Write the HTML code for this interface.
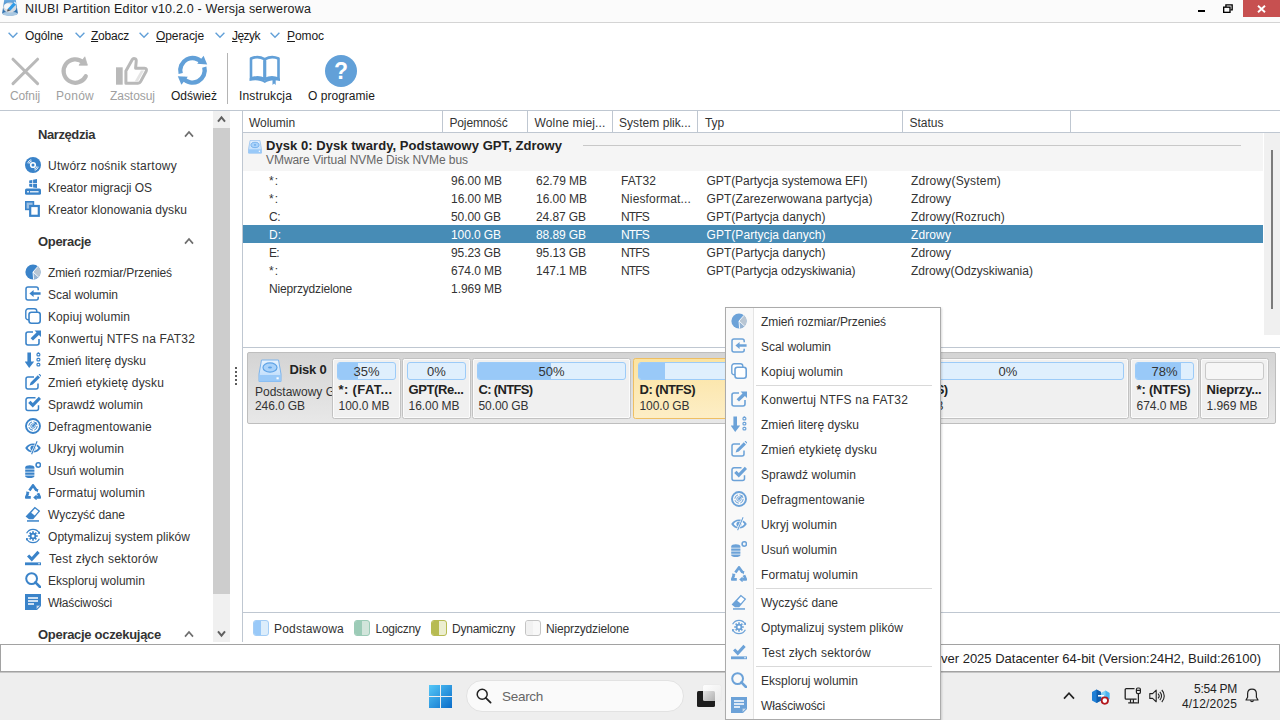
<!DOCTYPE html>
<html lang="pl"><head><meta charset="utf-8"><title>NIUBI Partition Editor</title>
<style>
html,body{margin:0;padding:0;}
body{width:1280px;height:720px;position:relative;overflow:hidden;background:#fff;font-family:"Liberation Sans",sans-serif;font-size:12px;color:#333;}
.r{position:absolute;box-sizing:border-box;display:block;}
.t{position:absolute;white-space:nowrap;display:block;}
.b{font-weight:bold;}
.g{color:#a0a0a0;}
.w{color:#fff;}
u{text-decoration:underline;text-underline-offset:1px;}
.b{font-size:13px;}

</style></head>
<body>
<div class="r" style="left:0px;top:0px;width:1280px;height:22px;background:#fbfbfb;"></div>
<div class="r" style="left:0px;top:22px;width:1280px;height:1px;background:#d4d4d4;"></div>
<svg class="r" style="left:2px;top:0px" width="16" height="17" viewBox="0 0 16 17"><defs><linearGradient id="ig" x1="0" y1="0" x2="0" y2="1"><stop offset="0" stop-color="#6aaae0"/><stop offset="1" stop-color="#1f5f9e"/></linearGradient></defs>
<path d="M2.2 0h11.6l2 12.8c0 1.7-3.300000000000001 2.8-7.8 2.8S0.2 14.5 0.2 12.8z" fill="url(#ig)"/>
<ellipse cx="8" cy="13.8" rx="7.6" ry="2.1" fill="#a9c8e2"/>
<ellipse cx="7.8" cy="7.6" rx="6.6" ry="5" fill="#d5dbe2"/><ellipse cx="5.6" cy="6.4" rx="3.4" ry="2.8" fill="#f6f8fa"/>
<path d="M5.8 8.8l5.800000000000001-6.2 2.4 2-5.800000000000001 6.2z" fill="#2f9be8"/><path d="M5.8 8.8l-0.8 2.600000000000001 3.2-0.6z" fill="#555"/><path d="M11.6 2.6l1-1 2.4 2-1 1z" fill="#d6eafb"/></svg>
<span class="t" style="left:25px;top:1px;height:16px;line-height:16px;letter-spacing:0.185px;color:#1a1a1a;font-size:12.5px;">NIUBI Partition Editor v10.2.0 - Wersja serwerowa</span>
<div class="r" style="left:1198px;top:10px;width:7px;height:2px;background:#000;"></div>
<svg class="r" style="left:1223px;top:4px" width="10" height="9.2" viewBox="0 0 12 11"><path d="M3.5 3.5V1h7.5v6H9" fill="none" stroke="#000" stroke-width="1.6"/><rect x="0.8" y="3.8" width="7.6" height="6.2" fill="#fbfbfb" stroke="#000" stroke-width="1.6"/></svg>
<div class="r" style="left:1243px;top:0px;width:37px;height:17px;background:#c75050;"></div>
<svg class="r" style="left:1257px;top:4.5px" width="9" height="8" viewBox="0 0 9 8"><path d="M1 0.8L8 7.2M8 0.8L1 7.2" stroke="#fff" stroke-width="1.9" fill="none"/></svg>
<svg class="r" style="left:7px;top:32px" width="12" height="7" viewBox="0 0 12 7"><path d="M1.6 0.8L6 5.2L10.4 0.8" fill="none" stroke="#62a0d8" stroke-width="1.4"/></svg>
<span class="t" style="left:25px;top:28px;height:16px;line-height:16px;letter-spacing:-0.117px;color:#1a1a1a;">Ogólne</span>
<svg class="r" style="left:73.5px;top:32px" width="12" height="7" viewBox="0 0 12 7"><path d="M1.6 0.8L6 5.2L10.4 0.8" fill="none" stroke="#62a0d8" stroke-width="1.4"/></svg>
<span class="t" style="left:91px;top:28px;height:16px;line-height:16px;letter-spacing:-0.229px;color:#1a1a1a;"><u>Z</u>obacz</span>
<svg class="r" style="left:137.5px;top:32px" width="12" height="7" viewBox="0 0 12 7"><path d="M1.6 0.8L6 5.2L10.4 0.8" fill="none" stroke="#62a0d8" stroke-width="1.4"/></svg>
<span class="t" style="left:156px;top:28px;height:16px;line-height:16px;letter-spacing:-0.088px;color:#1a1a1a;"><u>O</u>peracje</span>
<svg class="r" style="left:213.5px;top:32px" width="12" height="7" viewBox="0 0 12 7"><path d="M1.6 0.8L6 5.2L10.4 0.8" fill="none" stroke="#62a0d8" stroke-width="1.4"/></svg>
<span class="t" style="left:232px;top:28px;height:16px;line-height:16px;letter-spacing:-0.537px;color:#1a1a1a;"><u>J</u>ęzyk</span>
<svg class="r" style="left:268.5px;top:32px" width="12" height="7" viewBox="0 0 12 7"><path d="M1.6 0.8L6 5.2L10.4 0.8" fill="none" stroke="#62a0d8" stroke-width="1.4"/></svg>
<span class="t" style="left:287px;top:28px;height:16px;line-height:16px;letter-spacing:-0.072px;color:#1a1a1a;"><u>P</u>omoc</span>
<svg class="r" style="left:10px;top:56px" width="30" height="30" viewBox="0 0 30 30"><path d="M3 3.2L27.6 27.6M27.6 3.2L3 27.6" stroke="#b9b9b9" stroke-width="3" stroke-linecap="round" fill="none"/></svg>
<span class="t g" style="left:10px;top:88px;height:16px;line-height:16px;letter-spacing:-0.115px;">Cofnij</span>
<svg class="r" style="left:60px;top:55px" width="30" height="32" viewBox="0 0 30 32"><path d="M25.8 21.2A11.7 11.7 0 1 1 23.2 7.4" fill="none" stroke="#b9b9b9" stroke-width="4.2" stroke-linecap="round"/><path d="M19 10.2L27.4 10.2L24.8 1.8z" fill="#b9b9b9" stroke="#b9b9b9" stroke-width="0.8" stroke-linejoin="round"/></svg>
<span class="t g" style="left:56px;top:88px;height:16px;line-height:16px;letter-spacing:0.259px;">Ponów</span>
<svg class="r" style="left:114px;top:55px" width="36" height="32" viewBox="0 0 36 32"><rect x="2" y="12.3" width="6.7" height="17.4" fill="#b9b9b9"/>
<path d="M11.9 28.2V16L18.3 4.6C19.3 2.8 22.6 3.2 22.2 6.4L21.6 13.2H30.6C32.4 13.2 32.8 14.8 32.2 16.2L26.6 26.6C26 27.8 25.2 28.2 24 28.2z" fill="none" stroke="#b9b9b9" stroke-width="3" stroke-linejoin="round"/>
<path d="M20.5 26.7L27 15.6h3L23.800000000000001 26.7z" fill="#e4e4e4"/></svg>
<span class="t g" style="left:110px;top:88px;height:16px;line-height:16px;letter-spacing:-0.045px;">Zastosuj</span>
<svg class="r" style="left:176px;top:54px" width="34" height="34" viewBox="0 0 34 34"><path d="M4.7 19.5A12.2 12.2 0 0 1 25.9 8.5" fill="none" stroke="#62a0d8" stroke-width="4.4"/>
<path d="M28.3 13.1A12.2 12.2 0 0 1 7.1 24.1" fill="none" stroke="#62a0d8" stroke-width="4.4"/>
<path d="M27.6 1.8L31.2 10.4L21.2 9.8z" fill="#62a0d8"/><path d="M5.4 30.8L1.8 22.2L11.8 22.8z" fill="#62a0d8"/></svg>
<span class="t" style="left:171px;top:88px;height:16px;line-height:16px;letter-spacing:-0.002px;color:#1a1a1a;">Odśwież</span>
<div class="r" style="left:227px;top:53px;width:1px;height:51px;background:#b4b4b4;"></div>
<svg class="r" style="left:248px;top:55px" width="34" height="32" viewBox="0 0 34 32"><path d="M3 3.5C7.5 1.5 12.5 1.8 16.5 4.2V24.2C12.5 22 7.5 21.8 3 23.8z" fill="none" stroke="#62a0d8" stroke-width="2.6" stroke-linejoin="round"/>
<path d="M30.5 3.5C26 1.5 21 1.8 17 4.2V24.2C21 22 26 21.8 30.5 23.8z" fill="none" stroke="#62a0d8" stroke-width="2.6" stroke-linejoin="round"/>
<path d="M1.5 23.5C7 21.8 12.5 22.2 16.8 25.5C21 22.2 26.5 21.8 32 23.5V26C26.5 24.5 21 25 16.8 28C12.5 25 7 24.5 1.5 26z" fill="#62a0d8"/>
<path d="M24.5 24.5h3.2v5.6l-1.6-1.5l-1.6 1.5z" fill="#62a0d8"/></svg>
<span class="t" style="left:239px;top:88px;height:16px;line-height:16px;letter-spacing:0.164px;color:#1a1a1a;">Instrukcja</span>
<div class="r" style="left:325px;top:55px;width:32px;height:32px;background:#62a0d8;border-radius:50%;"></div>
<span class="t b w" style="left:333px;top:56.5px;height:28px;line-height:28px;font-size:23px;width:16px;text-align:center;">?</span>
<span class="t" style="left:308px;top:88px;height:16px;line-height:16px;letter-spacing:0.027px;color:#1a1a1a;">O programie</span>
<div class="r" style="left:0px;top:110px;width:1280px;height:1px;background:#bfc7d1;"></div>
<span class="t b" style="left:38px;top:127px;height:16px;line-height:16px;letter-spacing:-0.411px;">Narzędzia</span>
<svg class="r" style="left:184px;top:130px" width="10" height="8" viewBox="0 0 10 8"><path d="M1 6.6L5 2L9 6.6" fill="none" stroke="#6e6e6e" stroke-width="1.7"/></svg>
<span class="t b" style="left:38px;top:234px;height:16px;line-height:16px;letter-spacing:-0.332px;">Operacje</span>
<svg class="r" style="left:184px;top:237px" width="10" height="8" viewBox="0 0 10 8"><path d="M1 6.6L5 2L9 6.6" fill="none" stroke="#6e6e6e" stroke-width="1.7"/></svg>
<span class="t b" style="left:38px;top:627px;height:16px;line-height:16px;letter-spacing:-0.297px;">Operacje oczekujące</span>
<svg class="r" style="left:184px;top:630px" width="10" height="8" viewBox="0 0 10 8"><path d="M1 6.6L5 2L9 6.6" fill="none" stroke="#6e6e6e" stroke-width="1.7"/></svg>
<svg class="r" style="left:25px;top:157px" width="16" height="16" viewBox="0 0 16 16"><circle cx="8" cy="8" r="8" fill="#3a83c9"/><circle cx="8" cy="8" r="3.1" fill="#fff"/><circle cx="8" cy="8" r="1.5" fill="#3a83c9"/><path d="M2.6 6.2A5.8 5.8 0 0 1 6.2 2.6M3.9 6.8A4.4 4.4 0 0 1 6.8 3.9M13.4 9.8A5.8 5.8 0 0 1 9.8 13.4M12.1 9.2A4.4 4.4 0 0 1 9.2 12.1" stroke="#fff" stroke-width="0.9" fill="none"/></svg>
<span class="t" style="left:48px;top:158px;height:16px;line-height:16px;letter-spacing:0.256px;">Utwórz nośnik startowy</span>
<svg class="r" style="left:25px;top:179px" width="16" height="16" viewBox="0 0 16 16"><path d="M4.2 1.6L7.3 1v3.2H4.2zM8.1 0.8L12 0v4.2H8.1zM4.2 5h3.1v3.2L4.2 7.6zM8.1 5H12v4.1L8.1 8.4z" fill="#3a83c9"/><rect x="0" y="9.6" width="16" height="6.2" rx="1.6" fill="#3a83c9"/><rect x="2.2" y="12" width="1.6" height="1.5" fill="#fff"/><rect x="5" y="12.2" width="8.6" height="1.2" fill="#fff"/></svg>
<span class="t" style="left:48px;top:180px;height:16px;line-height:16px;letter-spacing:-0.037px;">Kreator migracji OS</span>
<svg class="r" style="left:25px;top:201px" width="16" height="16" viewBox="0 0 16 16"><rect x="0.8" y="0.8" width="7.6" height="7.6" fill="#9cc0e4" stroke="#3a83c9" stroke-width="1.6"/><rect x="5.2" y="5" width="8.6" height="9.8" fill="#fff" stroke="#3a83c9" stroke-width="2.2"/></svg>
<span class="t" style="left:48px;top:202px;height:16px;line-height:16px;letter-spacing:0.066px;">Kreator klonowania dysku</span>
<svg class="r" style="left:25px;top:264px" width="16" height="16" viewBox="0 0 16 16"><circle cx="8" cy="8" r="7.6" fill="#3a83c9"/><path d="M8 8L13 2.3A7.6 7.6 0 0 1 13.6 13.2z" fill="#b9c6d3"/><path d="M8 8L13.6 13.2A7.6 7.6 0 0 1 8.6 15.6z" fill="#97b4d2"/><path d="M13 2.3L8 8L13.6 13.2M8 8L8.6 15.6" stroke="#fff" stroke-width="0.9" fill="none"/></svg>
<span class="t" style="left:48px;top:265px;height:16px;line-height:16px;letter-spacing:-0.123px;">Zmień rozmiar/Przenieś</span>
<svg class="r" style="left:25px;top:286px" width="16" height="16" viewBox="0 0 16 16"><path d="M13.2 4.2V3a2 2 0 0 0-2-2H3a2 2 0 0 0-2 2v9a2 2 0 0 0 2 2h8.200000000000001a2 2 0 0 0 2-2v-1.2" fill="none" stroke="#3a83c9" stroke-width="1.5"/><path d="M4.4 7.5L8.6 4v2.3H15.6v2.4H8.6V11z" fill="#3a83c9"/></svg>
<span class="t" style="left:48px;top:287px;height:16px;line-height:16px;letter-spacing:-0.059px;">Scal wolumin</span>
<svg class="r" style="left:25px;top:308px" width="16" height="16" viewBox="0 0 16 16"><rect x="0.8" y="0.8" width="11" height="11" rx="2.4" fill="#fff" stroke="#3a83c9" stroke-width="1.4"/><rect x="4" y="4.2" width="11.2" height="11" rx="2.4" fill="#fff" stroke="#3a83c9" stroke-width="1.6"/></svg>
<span class="t" style="left:48px;top:309px;height:16px;line-height:16px;letter-spacing:0.092px;">Kopiuj wolumin</span>
<svg class="r" style="left:25px;top:330px" width="16" height="16" viewBox="0 0 16 16"><path d="M8 2H3a2 2 0 0 0-2 2v9a2 2 0 0 0 2 2h9a2 2 0 0 0 2-2V9" fill="none" stroke="#3a83c9" stroke-width="1.6"/><path d="M9.6 0.6H16V7l-2.1-2.1L8 10.6 5.6 8.2l5.900000000000001-5.7z" fill="#3a83c9"/></svg>
<span class="t" style="left:48px;top:331px;height:16px;line-height:16px;letter-spacing:0.196px;">Konwertuj NTFS na FAT32</span>
<svg class="r" style="left:25px;top:352px" width="16" height="16" viewBox="0 0 16 16"><path d="M2.4 0.4h3.6v9.2h3.2L4.2 16 -0.2 9.6h2.6z" fill="#3a83c9"/><g fill="none" stroke="#3a83c9" stroke-width="1.2"><rect x="12" y="1.4" width="2.8" height="2.4" rx="0.9"/><rect x="12" y="6.4" width="2.8" height="2.4" rx="0.9"/><rect x="12" y="11.4" width="2.8" height="2.4" rx="0.9"/></g><path d="M12.6 0.9h1.6" stroke="#3a83c9" stroke-width="1"/></svg>
<span class="t" style="left:48px;top:353px;height:16px;line-height:16px;letter-spacing:0.035px;">Zmień literę dysku</span>
<svg class="r" style="left:25px;top:374px" width="16" height="16" viewBox="0 0 16 16"><path d="M9 3H3a2 2 0 0 0-2 2v8a2 2 0 0 0 2 2h8a2 2 0 0 0 2-2V9.5" fill="none" stroke="#3a83c9" stroke-width="1.5"/><path d="M4.6 11.6l1-3.2L12.800000000000001 1.2l2.2 2.2L7.8 10.6zM13.6 0.4l0.9-0.6 2 2-0.6 0.9z" fill="#3a83c9"/></svg>
<span class="t" style="left:48px;top:375px;height:16px;line-height:16px;letter-spacing:0.164px;">Zmień etykietę dysku</span>
<svg class="r" style="left:25px;top:396px" width="16" height="16" viewBox="0 0 16 16"><path d="M10.5 1.8H3a2 2 0 0 0-2 2v8.7a2 2 0 0 0 2 2h8.5a2 2 0 0 0 2-2V9.2" fill="none" stroke="#3a83c9" stroke-width="1.5"/><path d="M3.2 7l2.3-2.3L7.8 7 13.8 0.8l2.3 2.2L7.8 11.6z" fill="#3a83c9"/></svg>
<span class="t" style="left:48px;top:397px;height:16px;line-height:16px;letter-spacing:0.064px;">Sprawdź wolumin</span>
<svg class="r" style="left:25px;top:418px" width="16" height="16" viewBox="0 0 16 16"><circle cx="8" cy="8" r="7" fill="none" stroke="#3a83c9" stroke-width="1.9"/><circle cx="8" cy="8" r="4.2" fill="none" stroke="#3a83c9" stroke-width="1" stroke-dasharray="5 1.6"/><circle cx="8" cy="8" r="2.2" fill="none" stroke="#3a83c9" stroke-width="0.9"/><path d="M8 8l3.4-3.4" stroke="#3a83c9" stroke-width="1.4"/><circle cx="8" cy="8" r="1" fill="#3a83c9"/></svg>
<span class="t" style="left:48px;top:419px;height:16px;line-height:16px;letter-spacing:0.204px;">Defragmentowanie</span>
<svg class="r" style="left:25px;top:440px" width="16" height="16" viewBox="0 0 16 16"><path d="M0.2 8C2 5 4.800000000000001 3.4 8 3.4S14 5 15.8 8C14 11 11.2 12.6 8 12.6S2 11 0.2 8z" fill="#3a83c9"/><path d="M2.6 8C4 6.2 5.9 5 8 5s4 1.2 5.4 3C12 9.8 10.1 11 8 11S4 9.8 2.6 8z" fill="#fff"/><circle cx="8" cy="8" r="2.6" fill="#3a83c9"/><path d="M12.4 1L6.4 14.6" stroke="#fff" stroke-width="2.4"/><path d="M12.1 1.2L6.6 14.2" stroke="#3a83c9" stroke-width="1.1"/></svg>
<span class="t" style="left:48px;top:441px;height:16px;line-height:16px;letter-spacing:0.101px;">Ukryj wolumin</span>
<svg class="r" style="left:25px;top:462px" width="16" height="16" viewBox="0 0 16 16"><path d="M0.2 5.2c0-1.2 2.1-2 4.6-2s4.6 0.8 4.6 2v1.6H0.2zM0.2 7.6h9.2v2.2H0.2zM0.2 10.600000000000001h9.2v2.2H0.2zM0.2 13.6h9.2v0.6c0 1.1-2.1 1.8-4.6 1.8s-4.6-0.7-4.6-1.8z" fill="#3a83c9"/><circle cx="13.3" cy="3" r="2.2" fill="none" stroke="#3a83c9" stroke-width="1.6"/></svg>
<span class="t" style="left:48px;top:463px;height:16px;line-height:16px;letter-spacing:0.052px;">Usuń wolumin</span>
<svg class="r" style="left:25px;top:484px" width="16" height="16" viewBox="0 0 16 16"><path d="M4.4 6.6L8 1.4l3.6 5.2" fill="none" stroke="#3a83c9" stroke-width="2.7" stroke-linejoin="round"/><path d="M9.6 5.4l3.8-0.4-0.8 3.4z" fill="#3a83c9"/><path d="M3 9L1.2 13.4h4.6" fill="none" stroke="#3a83c9" stroke-width="2.7" stroke-linejoin="round"/><path d="M1 7.4l3.6 0.6-2.4 2.8z" fill="#3a83c9"/><path d="M13 9.2l1.8 4.2h-3.6" fill="none" stroke="#3a83c9" stroke-width="2.7" stroke-linejoin="round"/><path d="M8.2 13.4L11.6 10.4v6z" fill="#3a83c9"/></svg>
<span class="t" style="left:48px;top:485px;height:16px;line-height:16px;letter-spacing:0.144px;">Formatuj wolumin</span>
<svg class="r" style="left:25px;top:506px" width="16" height="16" viewBox="0 0 16 16"><path d="M9.8 0.8l5.4 4.2-7 8.2H4L0.6 10.4z" fill="#3a83c9"/><path d="M10 2.6l3.4 2.6-3.7 4.3L6.2 6.800000000000001z" fill="#fff"/><rect x="2" y="14.2" width="12" height="1.5" fill="#3a83c9"/></svg>
<span class="t" style="left:48px;top:507px;height:16px;line-height:16px;letter-spacing:-0.021px;">Wyczyść dane</span>
<svg class="r" style="left:25px;top:528px" width="16" height="16" viewBox="0 0 16 16"><path d="M1.6 5.2A7.2 7.2 0 0 1 14.4 5.2M14.4 10.8A7.2 7.2 0 0 1 1.6 10.8" fill="none" stroke="#3a83c9" stroke-width="1.2"/><path d="M14.9 3.2l0.1 2.8-2.7-0.6zM1.1 12.8l-0.1-2.8 2.7 0.6z" fill="#3a83c9"/><g stroke="#3a83c9" stroke-width="1.6"><path d="M8 3.2v9.6M3.2 8h9.6M4.6 4.6l6.8 6.8M4.6 11.4l6.8-6.8"/></g><circle cx="8" cy="8" r="3.3" fill="#3a83c9"/><circle cx="8" cy="8" r="1.5" fill="#fff"/></svg>
<span class="t" style="left:48px;top:529px;height:16px;line-height:16px;letter-spacing:0.052px;">Optymalizuj system plików</span>
<svg class="r" style="left:25px;top:550px" width="16" height="16" viewBox="0 0 16 16"><path d="M2 6.6l2.2-2.2L6.8 7 12.4 0.8l2.3 2.1L6.8 11.4z" fill="#3a83c9"/><rect x="0" y="12.4" width="16" height="2.8" fill="#3a83c9"/><rect x="13" y="13.4" width="2" height="0.8" fill="#fff"/></svg>
<span class="t" style="left:49px;top:551px;height:16px;line-height:16px;letter-spacing:0.261px;">Test złych sektorów</span>
<svg class="r" style="left:25px;top:572px" width="16" height="16" viewBox="0 0 16 16"><circle cx="6.6" cy="6.6" r="5.4" fill="none" stroke="#3a83c9" stroke-width="2"/><path d="M10.4 10.4L15 15" stroke="#3a83c9" stroke-width="2.6" stroke-linecap="round"/></svg>
<span class="t" style="left:48px;top:573px;height:16px;line-height:16px;letter-spacing:0.017px;">Eksploruj wolumin</span>
<svg class="r" style="left:25px;top:594px" width="16" height="16" viewBox="0 0 16 16"><path d="M0 0h16v12l-4 4H0z" fill="#3a83c9"/><path d="M3 4h10M3 7h10M3 10h6" stroke="#fff" stroke-width="1.5"/><path d="M11.2 15.8V11.2h4.6z" fill="#cfdceb" stroke="#3a83c9" stroke-width="0.8"/></svg>
<span class="t" style="left:48px;top:595px;height:16px;line-height:16px;letter-spacing:-0.122px;">Właściwości</span>
<div class="r" style="left:213px;top:111px;width:17px;height:531px;background:#f0f0f0;"></div>
<div class="r" style="left:213px;top:128px;width:17px;height:466px;background:#cdcdcd;"></div>
<svg class="r" style="left:217px;top:115px" width="9" height="8" viewBox="0 0 9 8"><path d="M1 6.6L4.5 2.4L8 6.6" fill="none" stroke="#606060" stroke-width="2"/></svg>
<svg class="r" style="left:217px;top:630px" width="9" height="8" viewBox="0 0 9 8"><path d="M1 1.4L4.5 5.6L8 1.4" fill="none" stroke="#606060" stroke-width="2"/></svg>
<div class="r" style="left:235px;top:367px;width:2px;height:2px;background:#5c5c5c;"></div>
<div class="r" style="left:235px;top:371px;width:2px;height:2px;background:#5c5c5c;"></div>
<div class="r" style="left:235px;top:375px;width:2px;height:2px;background:#5c5c5c;"></div>
<div class="r" style="left:235px;top:379px;width:2px;height:2px;background:#5c5c5c;"></div>
<div class="r" style="left:235px;top:383px;width:2px;height:2px;background:#5c5c5c;"></div>
<div class="r" style="left:242px;top:111px;width:1px;height:531px;background:#bfc7d1;"></div>
<div class="r" style="left:243px;top:132px;width:1037px;height:1px;background:#bfc7d1;"></div>
<div class="r" style="left:442px;top:111px;width:1px;height:21px;background:#bfc7d1;"></div>
<div class="r" style="left:527px;top:111px;width:1px;height:21px;background:#bfc7d1;"></div>
<div class="r" style="left:612px;top:111px;width:1px;height:21px;background:#bfc7d1;"></div>
<div class="r" style="left:697px;top:111px;width:1px;height:21px;background:#bfc7d1;"></div>
<div class="r" style="left:902px;top:111px;width:1px;height:21px;background:#bfc7d1;"></div>
<div class="r" style="left:1070px;top:111px;width:1px;height:21px;background:#bfc7d1;"></div>
<span class="t" style="left:249px;top:115px;height:16px;line-height:16px;letter-spacing:-0.067px;">Wolumin</span>
<span class="t" style="left:449.5px;top:115px;height:16px;line-height:16px;letter-spacing:-0.153px;">Pojemność</span>
<span class="t" style="left:534.5px;top:115px;height:16px;line-height:16px;letter-spacing:0.143px;">Wolne miej...</span>
<span class="t" style="left:619px;top:115px;height:16px;line-height:16px;letter-spacing:0.046px;">System plik...</span>
<span class="t" style="left:705px;top:115px;height:16px;line-height:16px;letter-spacing:-0.115px;">Typ</span>
<span class="t" style="left:909.5px;top:115px;height:16px;line-height:16px;letter-spacing:-0.005px;">Status</span>
<div class="r" style="left:243px;top:133px;width:1020px;height:38px;background:#f5f5f5;"></div>
<div class="r" style="left:583px;top:145px;width:658px;height:1px;background:#c8c8c8;"></div>
<svg class="r" style="left:248px;top:140px" width="14" height="14" viewBox="0 0 24 24"><defs><linearGradient id="dg1" x1="0" y1="0" x2="0" y2="1"><stop offset="0" stop-color="#e8f3fe"/><stop offset="1" stop-color="#b5d8fb"/></linearGradient></defs>
<path d="M3.5 1h17l2.5 14v7.5H1V15z" fill="url(#dg1)" stroke="#7db4ec" stroke-width="1"/>
<path d="M1 16h22v6.500000000000001H1z" fill="#99c9f8"/>
<ellipse cx="12" cy="8.5" rx="7" ry="4.6" fill="#a9d2fa" stroke="#5fa3e6" stroke-width="1.2"/>
<ellipse cx="12" cy="8.5" rx="2" ry="1.1" fill="#5fa3e6"/>
<rect x="18.5" y="18.3" width="2.2" height="2" fill="#fff"/></svg>
<span class="t b" style="left:266px;top:138px;height:16px;line-height:16px;letter-spacing:0.051px;color:#222;">Dysk 0: Dysk twardy, Podstawowy GPT, Zdrowy</span>
<span class="t" style="left:266px;top:152px;height:16px;line-height:16px;letter-spacing:-0.056px;color:#666;">VMware Virtual NVMe Disk NVMe bus</span>
<span class="t" style="left:269px;top:173px;height:16px;line-height:16px;letter-spacing:0.992px;">*:</span>
<span class="t" style="left:451px;top:173px;height:16px;line-height:16px;letter-spacing:-0.047px;">96.00 MB</span>
<span class="t" style="left:536px;top:173px;height:16px;line-height:16px;letter-spacing:-0.047px;">62.79 MB</span>
<span class="t" style="left:621px;top:173px;height:16px;line-height:16px;letter-spacing:0.106px;">FAT32</span>
<span class="t" style="left:706.5px;top:173px;height:16px;line-height:16px;letter-spacing:-0.014px;">GPT(Partycja systemowa EFI)</span>
<span class="t" style="left:911px;top:173px;height:16px;line-height:16px;letter-spacing:0.190px;">Zdrowy(System)</span>
<span class="t" style="left:269px;top:191px;height:16px;line-height:16px;letter-spacing:0.992px;">*:</span>
<span class="t" style="left:451px;top:191px;height:16px;line-height:16px;letter-spacing:-0.047px;">16.00 MB</span>
<span class="t" style="left:536px;top:191px;height:16px;line-height:16px;letter-spacing:-0.047px;">16.00 MB</span>
<span class="t" style="left:621px;top:191px;height:16px;line-height:16px;letter-spacing:0.153px;">Niesformat...</span>
<span class="t" style="left:706.5px;top:191px;height:16px;line-height:16px;letter-spacing:0.097px;">GPT(Zarezerwowana partycja)</span>
<span class="t" style="left:911px;top:191px;height:16px;line-height:16px;letter-spacing:0.109px;">Zdrowy</span>
<span class="t" style="left:269px;top:209px;height:16px;line-height:16px;letter-spacing:-0.500px;">C:</span>
<span class="t" style="left:451px;top:209px;height:16px;line-height:16px;letter-spacing:-0.088px;">50.00 GB</span>
<span class="t" style="left:536px;top:209px;height:16px;line-height:16px;letter-spacing:-0.088px;">24.87 GB</span>
<span class="t" style="left:621px;top:209px;height:16px;line-height:16px;letter-spacing:-0.836px;">NTFS</span>
<span class="t" style="left:706.5px;top:209px;height:16px;line-height:16px;letter-spacing:0.048px;">GPT(Partycja danych)</span>
<span class="t" style="left:911px;top:209px;height:16px;line-height:16px;letter-spacing:0.132px;">Zdrowy(Rozruch)</span>
<div class="r" style="left:243px;top:225px;width:1020px;height:18px;background:#478cb6;"></div>
<span class="t w" style="left:269px;top:227px;height:16px;line-height:16px;letter-spacing:0.000px;">D:</span>
<span class="t w" style="left:451px;top:227px;height:16px;line-height:16px;letter-spacing:-0.088px;">100.0 GB</span>
<span class="t w" style="left:536px;top:227px;height:16px;line-height:16px;letter-spacing:-0.088px;">88.89 GB</span>
<span class="t w" style="left:621px;top:227px;height:16px;line-height:16px;letter-spacing:-0.836px;">NTFS</span>
<span class="t w" style="left:706.5px;top:227px;height:16px;line-height:16px;letter-spacing:0.048px;">GPT(Partycja danych)</span>
<span class="t w" style="left:911px;top:227px;height:16px;line-height:16px;letter-spacing:0.109px;">Zdrowy</span>
<span class="t" style="left:269px;top:245px;height:16px;line-height:16px;letter-spacing:-0.672px;">E:</span>
<span class="t" style="left:451px;top:245px;height:16px;line-height:16px;letter-spacing:-0.088px;">95.23 GB</span>
<span class="t" style="left:536px;top:245px;height:16px;line-height:16px;letter-spacing:-0.088px;">95.13 GB</span>
<span class="t" style="left:621px;top:245px;height:16px;line-height:16px;letter-spacing:-0.836px;">NTFS</span>
<span class="t" style="left:706.5px;top:245px;height:16px;line-height:16px;letter-spacing:0.048px;">GPT(Partycja danych)</span>
<span class="t" style="left:911px;top:245px;height:16px;line-height:16px;letter-spacing:0.109px;">Zdrowy</span>
<span class="t" style="left:269px;top:263px;height:16px;line-height:16px;letter-spacing:0.992px;">*:</span>
<span class="t" style="left:451px;top:263px;height:16px;line-height:16px;letter-spacing:-0.047px;">674.0 MB</span>
<span class="t" style="left:536px;top:263px;height:16px;line-height:16px;letter-spacing:-0.047px;">147.1 MB</span>
<span class="t" style="left:621px;top:263px;height:16px;line-height:16px;letter-spacing:-0.836px;">NTFS</span>
<span class="t" style="left:706.5px;top:263px;height:16px;line-height:16px;letter-spacing:-0.066px;">GPT(Partycja odzyskiwania)</span>
<span class="t" style="left:911px;top:263px;height:16px;line-height:16px;letter-spacing:0.032px;">Zdrowy(Odzyskiwania)</span>
<span class="t" style="left:269px;top:281px;height:16px;line-height:16px;letter-spacing:-0.159px;">Nieprzydzielone</span>
<span class="t" style="left:451px;top:281px;height:16px;line-height:16px;letter-spacing:-0.047px;">1.969 MB</span>
<div class="r" style="left:1264px;top:133px;width:16px;height:202px;background:#f0f0f0;"></div>
<div class="r" style="left:1271px;top:150px;width:2px;height:159px;background:#7c7c7c;"></div>
<div class="r" style="left:243px;top:347px;width:1037px;height:1px;background:#bfc7d1;"></div>
<div class="r" style="left:247px;top:352px;width:1029px;height:72px;background:linear-gradient(#d4d4d4,#e8e8e8);border:1px solid #bebebe;border-radius:2px;"></div>
<svg class="r" style="left:258px;top:359px" width="24" height="24" viewBox="0 0 24 24"><defs><linearGradient id="dg2" x1="0" y1="0" x2="0" y2="1"><stop offset="0" stop-color="#e8f3fe"/><stop offset="1" stop-color="#b5d8fb"/></linearGradient></defs>
<path d="M3.5 1h17l2.5 14v7.5H1V15z" fill="url(#dg2)" stroke="#7db4ec" stroke-width="1"/>
<path d="M1 16h22v6.500000000000001H1z" fill="#99c9f8"/>
<ellipse cx="12" cy="8.5" rx="7" ry="4.6" fill="#a9d2fa" stroke="#5fa3e6" stroke-width="1.2"/>
<ellipse cx="12" cy="8.5" rx="2" ry="1.1" fill="#5fa3e6"/>
<rect x="18.5" y="18.3" width="2.2" height="2" fill="#fff"/></svg>
<span class="t b" style="left:289.5px;top:361.5px;height:16px;line-height:16px;letter-spacing:-0.219px;color:#222;">Disk 0</span>
<div class="r" style="left:255px;top:383px;width:77px;height:16px;overflow:hidden;"><span class="t" style="left:0;top:1px;height:16px;line-height:16px;">Podstawowy GPT</span></div>
<span class="t" style="left:255px;top:398px;height:16px;line-height:16px;letter-spacing:-0.088px;">246.0 GB</span>
<div class="r" style="left:332px;top:358px;width:69px;height:61px;background:#f0f0f0;border:1px solid #c2c2c2;border-radius:2.5px;box-shadow:inset 0 0 0 1px rgba(255,255,255,.75);"></div>
<div class="r" style="left:337px;top:362px;width:59px;height:18px;background:#dfeffd;border:1px solid #9ccbf8;border-radius:3px;overflow:hidden;"><div class="r" style="left:-1px;top:-1px;width:21px;height:18px;background:#99c9f8"></div></div>
<span class="t" style="left:337px;top:364px;height:16px;line-height:16px;width:59px;text-align:center;font-size:13px;">35%</span>
<span class="t b" style="left:338.5px;top:381.5px;height:16px;line-height:16px;letter-spacing:0.369px;color:#222;">*: (FAT...</span>
<span class="t" style="left:338.5px;top:398px;height:16px;line-height:16px;letter-spacing:-0.047px;">100.0 MB</span>
<div class="r" style="left:402px;top:358px;width:69px;height:61px;background:#f0f0f0;border:1px solid #c2c2c2;border-radius:2.5px;box-shadow:inset 0 0 0 1px rgba(255,255,255,.75);"></div>
<div class="r" style="left:407px;top:362px;width:59px;height:18px;background:#dfeffd;border:1px solid #9ccbf8;border-radius:3px;overflow:hidden;"><div class="r" style="left:-1px;top:-1px;width:0px;height:18px;background:#99c9f8"></div></div>
<span class="t" style="left:407px;top:364px;height:16px;line-height:16px;width:59px;text-align:center;font-size:13px;">0%</span>
<span class="t b" style="left:408.5px;top:381.5px;height:16px;line-height:16px;letter-spacing:-0.391px;color:#222;">GPT(Re...</span>
<span class="t" style="left:408.5px;top:398px;height:16px;line-height:16px;letter-spacing:-0.047px;">16.00 MB</span>
<div class="r" style="left:472px;top:358px;width:159px;height:61px;background:#f0f0f0;border:1px solid #c2c2c2;border-radius:2.5px;box-shadow:inset 0 0 0 1px rgba(255,255,255,.75);"></div>
<div class="r" style="left:477px;top:362px;width:149px;height:18px;background:#dfeffd;border:1px solid #9ccbf8;border-radius:3px;overflow:hidden;"><div class="r" style="left:-1px;top:-1px;width:74px;height:18px;background:#99c9f8"></div></div>
<span class="t" style="left:477px;top:364px;height:16px;line-height:16px;width:149px;text-align:center;font-size:13px;">50%</span>
<span class="t b" style="left:478.5px;top:381.5px;height:16px;line-height:16px;letter-spacing:-0.660px;color:#222;">C: (NTFS)</span>
<span class="t" style="left:478.5px;top:398px;height:16px;line-height:16px;letter-spacing:-0.088px;">50.00 GB</span>
<div class="r" style="left:633px;top:358px;width:253px;height:61px;background:linear-gradient(#fbe3a1,#fdeec6);border:1px solid #efbf62;border-radius:2.5px;"></div>
<div class="r" style="left:638px;top:362px;width:243px;height:18px;background:#dfeffd;border:1px solid #9ccbf8;border-radius:3px;overflow:hidden;"><div class="r" style="left:-1px;top:-1px;width:27px;height:18px;background:#99c9f8"></div></div>
<span class="t" style="left:638px;top:364px;height:16px;line-height:16px;width:243px;text-align:center;font-size:13px;">11%</span>
<span class="t b" style="left:639.5px;top:381.5px;height:16px;line-height:16px;letter-spacing:-0.493px;color:#222;">D: (NTFS)</span>
<span class="t" style="left:639.5px;top:398px;height:16px;line-height:16px;letter-spacing:-0.088px;">100.0 GB</span>
<div class="r" style="left:887px;top:358px;width:242px;height:61px;background:#f0f0f0;border:1px solid #c2c2c2;border-radius:2.5px;box-shadow:inset 0 0 0 1px rgba(255,255,255,.75);"></div>
<div class="r" style="left:892px;top:362px;width:232px;height:18px;background:#dfeffd;border:1px solid #9ccbf8;border-radius:3px;overflow:hidden;"><div class="r" style="left:-1px;top:-1px;width:0px;height:18px;background:#99c9f8"></div></div>
<span class="t" style="left:892px;top:364px;height:16px;line-height:16px;width:232px;text-align:center;font-size:13px;">0%</span>
<span class="t b" style="left:893.5px;top:381.5px;height:16px;line-height:16px;letter-spacing:-0.580px;color:#222;">E: (NTFS)</span>
<span class="t" style="left:893.5px;top:398px;height:16px;line-height:16px;letter-spacing:-0.088px;">95.23 GB</span>
<div class="r" style="left:1130px;top:358px;width:69px;height:61px;background:#f0f0f0;border:1px solid #c2c2c2;border-radius:2.5px;box-shadow:inset 0 0 0 1px rgba(255,255,255,.75);"></div>
<div class="r" style="left:1135px;top:362px;width:59px;height:18px;background:#dfeffd;border:1px solid #9ccbf8;border-radius:3px;overflow:hidden;"><div class="r" style="left:-1px;top:-1px;width:46px;height:18px;background:#99c9f8"></div></div>
<span class="t" style="left:1135px;top:364px;height:16px;line-height:16px;width:59px;text-align:center;font-size:13px;">78%</span>
<span class="t b" style="left:1136.5px;top:381.5px;height:16px;line-height:16px;letter-spacing:-0.179px;color:#222;">*: (NTFS)</span>
<span class="t" style="left:1136.5px;top:398px;height:16px;line-height:16px;letter-spacing:-0.047px;">674.0 MB</span>
<div class="r" style="left:1200px;top:358px;width:69px;height:61px;background:#f0f0f0;border:1px solid #c2c2c2;border-radius:2.5px;box-shadow:inset 0 0 0 1px rgba(255,255,255,.75);"></div>
<div class="r" style="left:1205px;top:362px;width:59px;height:18px;background:#f6f6f6;border:1px solid #c9c9c9;border-radius:3px;"></div>
<span class="t b" style="left:1206.5px;top:381.5px;height:16px;line-height:16px;letter-spacing:-0.184px;color:#222;">Nieprzy...</span>
<span class="t" style="left:1206.5px;top:398px;height:16px;line-height:16px;letter-spacing:-0.047px;">1.969 MB</span>
<div class="r" style="left:243px;top:612px;width:1037px;height:1px;background:#bfc7d1;"></div>
<div class="r" style="left:253px;top:620px;width:16px;height:16px;background:#dcedfb;border:1px solid #a3cdf6;border-radius:3px;overflow:hidden;"><div class="r" style="left:-1px;top:-1px;width:8px;height:16px;background:#99c9f8"></div></div>
<span class="t" style="left:274px;top:621px;height:16px;line-height:16px;letter-spacing:0.195px;">Podstawowa</span>
<div class="r" style="left:354px;top:620px;width:16px;height:16px;background:#d2e5db;border:1px solid #9ccbb7;border-radius:3px;overflow:hidden;"><div class="r" style="left:-1px;top:-1px;width:8px;height:16px;background:#9ccbb7"></div></div>
<span class="t" style="left:375.5px;top:621px;height:16px;line-height:16px;letter-spacing:-0.297px;">Logiczny</span>
<div class="r" style="left:431px;top:620px;width:16px;height:16px;background:#eceed0;border:1px solid #b7bb52;border-radius:3px;overflow:hidden;"><div class="r" style="left:-1px;top:-1px;width:8px;height:16px;background:#b7bb52"></div></div>
<span class="t" style="left:452px;top:621px;height:16px;line-height:16px;letter-spacing:-0.236px;">Dynamiczny</span>
<div class="r" style="left:525px;top:620px;width:16px;height:16px;background:#f8f8f8;border:1px solid #c4c4c4;border-radius:3px;overflow:hidden;"><div class="r" style="left:-1px;top:-1px;width:8px;height:16px;background:#f1f1f1"></div></div>
<span class="t" style="left:546px;top:621px;height:16px;line-height:16px;letter-spacing:-0.159px;">Nieprzydzielone</span>
<div class="r" style="left:0px;top:642px;width:1280px;height:2px;background:#fff;"></div>
<div class="r" style="left:0px;top:644px;width:1280px;height:28px;background:#fff;border:1px solid #a2a2a2;"></div>
<span class="t" style="left:941px;top:651px;height:16px;line-height:16px;letter-spacing:-0.003px;font-size:13px;color:#222;">ver 2025 Datacenter 64-bit (Version:24H2, Build:26100)</span>
<div class="r" style="left:0px;top:672px;width:1280px;height:48px;background:#eeeeee;"></div>
<div class="r" style="left:0px;top:672px;width:1280px;height:1px;background:#c6c6c6;"></div>
<svg class="r" style="left:429px;top:685px" width="23" height="23" viewBox="0 0 23 23"><defs><linearGradient id="wg" x1="0" y1="0" x2="1" y2="1"><stop offset="0" stop-color="#55c8f8"/><stop offset="1" stop-color="#0a6cc9"/></linearGradient></defs>
<path d="M0 0h11v11H0zM12 0h11v11H12zM0 12h11v11H0zM12 12h11v11H12z" fill="url(#wg)"/></svg>
<div class="r" style="left:466px;top:680px;width:218px;height:32px;background:#fafafa;border:1px solid #e2e2e2;border-radius:16px;"></div>
<svg class="r" style="left:476px;top:688px" width="16" height="16" viewBox="0 0 16 16"><circle cx="6.2" cy="6.2" r="5" fill="none" stroke="#222" stroke-width="1.5"/><path d="M9.8 9.8L14.6 14.6" stroke="#222" stroke-width="1.8" stroke-linecap="round"/></svg>
<span class="t" style="left:502px;top:688px;height:18px;line-height:18px;letter-spacing:-0.297px;font-size:13.5px;color:#666;">Search</span>
<div class="r" style="left:697px;top:691px;width:18px;height:16px;background:#1e1e1e;border-radius:1.5px;"></div>
<div class="r" style="left:703px;top:685px;width:18px;height:16px;border-radius:1.5px;background:linear-gradient(135deg,rgba(255,255,255,.95),rgba(232,232,232,.65));box-shadow:0 0 1px rgba(0,0,0,.12);"></div>
<svg class="r" style="left:1063px;top:691px" width="12" height="9" viewBox="0 0 12 9"><path d="M1 7.6L6 2.2L11 7.6" fill="none" stroke="#222" stroke-width="1.7"/></svg>
<svg class="r" style="left:1092px;top:689px" width="18" height="16" viewBox="0 0 18 16"><path d="M0 3l4.5-2.500000000000001L9 3v8.5L4.5 14 0 11.5z" fill="#1e7fd6"/><path d="M4.5 0.5L9 3v8.5L4.5 14z" fill="#0f5eae"/>
<path d="M9 4l4.5-2.500000000000001L17.5 4v6l-4 2.5L9 10z" fill="#7fd0f5"/><path d="M13.5 1.5L17.5 4v6l-4 2.500000000000001z" fill="#4bb3ee"/>
<rect x="6" y="6" width="6" height="1.6" fill="#fff"/>
<circle cx="12.8" cy="11.600000000000001" r="3.2" fill="#fff" stroke="#b3171d" stroke-width="1.8"/></svg>
<svg class="r" style="left:1124px;top:687px" width="18" height="18" viewBox="0 0 18 18"><path d="M10.5 1.7H2.2A1 1 0 0 0 1.2 2.7V11.2a1 1 0 0 0 1 1H12.6" fill="none" stroke="#222" stroke-width="1.3"/>
<path d="M6.5 12.2v3.2M9.4 12.2v3.2M4.2 15.9h9.6" stroke="#222" stroke-width="1.2" fill="none"/>
<rect x="12.4" y="1" width="4" height="5.6" rx="1.4" fill="#eeeeee" stroke="#222" stroke-width="1.2"/><path d="M12.4 3.4h4M14.4 6.6V16.4" stroke="#222" stroke-width="1.2"/></svg>
<svg class="r" style="left:1149px;top:689px" width="17" height="14" viewBox="0 0 17 14"><path d="M0.8 4.6H3.6L7.2 1.2V12.8L3.6 9.4H0.8z" fill="none" stroke="#222" stroke-width="1.1" stroke-linejoin="round"/>
<path d="M9 4.6A3.4 3.4 0 0 1 9 9.4M10.8 2.8A6 6 0 0 1 10.8 11.2M12.8 1A8.6 8.6 0 0 1 12.8 13" fill="none" stroke="#222" stroke-width="1.1"/></svg>
<span class="t" style="left:1194px;top:680.5px;height:16px;line-height:16px;letter-spacing:-0.243px;color:#222;">5:54 PM</span>
<span class="t" style="left:1182px;top:696px;height:16px;line-height:16px;letter-spacing:0.179px;color:#222;">4/12/2025</span>
<svg class="r" style="left:1245px;top:688px" width="14" height="16" viewBox="0 0 14 16"><path d="M7 1.2C4.2 1.2 2.6 3.4 2.6 6V9.2L1 12h12l-1.6-2.800000000000001V6C11.4 3.4 9.8 1.2 7 1.2z" fill="none" stroke="#222" stroke-width="1.2" stroke-linejoin="round"/><path d="M5.4 12.4a1.7 1.7 0 0 0 3.2 0" fill="none" stroke="#222" stroke-width="1.2"/></svg>
<div class="r" style="left:725px;top:307px;width:216px;height:413px;background:#fff;border:1px solid #ababab;box-shadow:1px 1px 2px rgba(0,0,0,.15);"></div>
<div class="r" style="left:726px;top:308px;width:27px;height:411px;background:#f9f9f9;"></div>
<div class="r" style="left:753px;top:308px;width:1px;height:411px;background:#e4e4e4;"></div>
<svg class="r" style="left:731px;top:313px" width="16" height="16" viewBox="0 0 16 16"><circle cx="8" cy="8" r="7.6" fill="#6ca2d8"/><path d="M8 8L13 2.3A7.6 7.6 0 0 1 13.6 13.2z" fill="#b9c6d3"/><path d="M8 8L13.6 13.2A7.6 7.6 0 0 1 8.6 15.6z" fill="#97b4d2"/><path d="M13 2.3L8 8L13.6 13.2M8 8L8.6 15.6" stroke="#fff" stroke-width="0.9" fill="none"/></svg>
<span class="t" style="left:761px;top:314px;height:16px;line-height:16px;letter-spacing:-0.077px;">Zmień rozmiar/Przenieś</span>
<svg class="r" style="left:731px;top:338px" width="16" height="16" viewBox="0 0 16 16"><path d="M13.2 4.2V3a2 2 0 0 0-2-2H3a2 2 0 0 0-2 2v9a2 2 0 0 0 2 2h8.200000000000001a2 2 0 0 0 2-2v-1.2" fill="none" stroke="#6ca2d8" stroke-width="1.5"/><path d="M4.4 7.5L8.6 4v2.3H15.6v2.4H8.6V11z" fill="#6ca2d8"/></svg>
<span class="t" style="left:761px;top:339px;height:16px;line-height:16px;letter-spacing:-0.059px;">Scal wolumin</span>
<svg class="r" style="left:731px;top:363px" width="16" height="16" viewBox="0 0 16 16"><rect x="0.8" y="0.8" width="11" height="11" rx="2.4" fill="#fff" stroke="#6ca2d8" stroke-width="1.4"/><rect x="4" y="4.2" width="11.2" height="11" rx="2.4" fill="#fff" stroke="#6ca2d8" stroke-width="1.6"/></svg>
<span class="t" style="left:761px;top:364px;height:16px;line-height:16px;letter-spacing:0.092px;">Kopiuj wolumin</span>
<div class="r" style="left:756px;top:385px;width:176px;height:1px;background:#d9d9d9;"></div>
<svg class="r" style="left:731px;top:391px" width="16" height="16" viewBox="0 0 16 16"><path d="M8 2H3a2 2 0 0 0-2 2v9a2 2 0 0 0 2 2h9a2 2 0 0 0 2-2V9" fill="none" stroke="#6ca2d8" stroke-width="1.6"/><path d="M9.6 0.6H16V7l-2.1-2.1L8 10.6 5.6 8.2l5.900000000000001-5.7z" fill="#6ca2d8"/></svg>
<span class="t" style="left:761px;top:392px;height:16px;line-height:16px;letter-spacing:0.196px;">Konwertuj NTFS na FAT32</span>
<svg class="r" style="left:731px;top:416px" width="16" height="16" viewBox="0 0 16 16"><path d="M2.4 0.4h3.6v9.2h3.2L4.2 16 -0.2 9.6h2.6z" fill="#6ca2d8"/><g fill="none" stroke="#6ca2d8" stroke-width="1.2"><rect x="12" y="1.4" width="2.8" height="2.4" rx="0.9"/><rect x="12" y="6.4" width="2.8" height="2.4" rx="0.9"/><rect x="12" y="11.4" width="2.8" height="2.4" rx="0.9"/></g><path d="M12.6 0.9h1.6" stroke="#6ca2d8" stroke-width="1"/></svg>
<span class="t" style="left:761px;top:417px;height:16px;line-height:16px;letter-spacing:0.035px;">Zmień literę dysku</span>
<svg class="r" style="left:731px;top:441px" width="16" height="16" viewBox="0 0 16 16"><path d="M9 3H3a2 2 0 0 0-2 2v8a2 2 0 0 0 2 2h8a2 2 0 0 0 2-2V9.5" fill="none" stroke="#6ca2d8" stroke-width="1.5"/><path d="M4.6 11.6l1-3.2L12.800000000000001 1.2l2.2 2.2L7.8 10.6zM13.6 0.4l0.9-0.6 2 2-0.6 0.9z" fill="#6ca2d8"/></svg>
<span class="t" style="left:761px;top:442px;height:16px;line-height:16px;letter-spacing:0.164px;">Zmień etykietę dysku</span>
<svg class="r" style="left:731px;top:466px" width="16" height="16" viewBox="0 0 16 16"><path d="M10.5 1.8H3a2 2 0 0 0-2 2v8.7a2 2 0 0 0 2 2h8.5a2 2 0 0 0 2-2V9.2" fill="none" stroke="#6ca2d8" stroke-width="1.5"/><path d="M3.2 7l2.3-2.3L7.8 7 13.8 0.8l2.3 2.2L7.8 11.6z" fill="#6ca2d8"/></svg>
<span class="t" style="left:761px;top:467px;height:16px;line-height:16px;letter-spacing:0.064px;">Sprawdź wolumin</span>
<svg class="r" style="left:731px;top:491px" width="16" height="16" viewBox="0 0 16 16"><circle cx="8" cy="8" r="7" fill="none" stroke="#6ca2d8" stroke-width="1.9"/><circle cx="8" cy="8" r="4.2" fill="none" stroke="#6ca2d8" stroke-width="1" stroke-dasharray="5 1.6"/><circle cx="8" cy="8" r="2.2" fill="none" stroke="#6ca2d8" stroke-width="0.9"/><path d="M8 8l3.4-3.4" stroke="#6ca2d8" stroke-width="1.4"/><circle cx="8" cy="8" r="1" fill="#6ca2d8"/></svg>
<span class="t" style="left:761px;top:492px;height:16px;line-height:16px;letter-spacing:0.204px;">Defragmentowanie</span>
<svg class="r" style="left:731px;top:516px" width="16" height="16" viewBox="0 0 16 16"><path d="M0.2 8C2 5 4.800000000000001 3.4 8 3.4S14 5 15.8 8C14 11 11.2 12.6 8 12.6S2 11 0.2 8z" fill="#6ca2d8"/><path d="M2.6 8C4 6.2 5.9 5 8 5s4 1.2 5.4 3C12 9.8 10.1 11 8 11S4 9.8 2.6 8z" fill="#fff"/><circle cx="8" cy="8" r="2.6" fill="#6ca2d8"/><path d="M12.4 1L6.4 14.6" stroke="#fff" stroke-width="2.4"/><path d="M12.1 1.2L6.6 14.2" stroke="#6ca2d8" stroke-width="1.1"/></svg>
<span class="t" style="left:761px;top:517px;height:16px;line-height:16px;letter-spacing:0.101px;">Ukryj wolumin</span>
<svg class="r" style="left:731px;top:541px" width="16" height="16" viewBox="0 0 16 16"><path d="M0.2 5.2c0-1.2 2.1-2 4.6-2s4.6 0.8 4.6 2v1.6H0.2zM0.2 7.6h9.2v2.2H0.2zM0.2 10.600000000000001h9.2v2.2H0.2zM0.2 13.6h9.2v0.6c0 1.1-2.1 1.8-4.6 1.8s-4.6-0.7-4.6-1.8z" fill="#6ca2d8"/><circle cx="13.3" cy="3" r="2.2" fill="none" stroke="#6ca2d8" stroke-width="1.6"/></svg>
<span class="t" style="left:761px;top:542px;height:16px;line-height:16px;letter-spacing:0.052px;">Usuń wolumin</span>
<svg class="r" style="left:731px;top:566px" width="16" height="16" viewBox="0 0 16 16"><path d="M4.4 6.6L8 1.4l3.6 5.2" fill="none" stroke="#6ca2d8" stroke-width="2.7" stroke-linejoin="round"/><path d="M9.6 5.4l3.8-0.4-0.8 3.4z" fill="#6ca2d8"/><path d="M3 9L1.2 13.4h4.6" fill="none" stroke="#6ca2d8" stroke-width="2.7" stroke-linejoin="round"/><path d="M1 7.4l3.6 0.6-2.4 2.8z" fill="#6ca2d8"/><path d="M13 9.2l1.8 4.2h-3.6" fill="none" stroke="#6ca2d8" stroke-width="2.7" stroke-linejoin="round"/><path d="M8.2 13.4L11.6 10.4v6z" fill="#6ca2d8"/></svg>
<span class="t" style="left:761px;top:567px;height:16px;line-height:16px;letter-spacing:0.144px;">Formatuj wolumin</span>
<div class="r" style="left:756px;top:588px;width:176px;height:1px;background:#d9d9d9;"></div>
<svg class="r" style="left:731px;top:594px" width="16" height="16" viewBox="0 0 16 16"><path d="M9.8 0.8l5.4 4.2-7 8.2H4L0.6 10.4z" fill="#6ca2d8"/><path d="M10 2.6l3.4 2.6-3.7 4.3L6.2 6.800000000000001z" fill="#fff"/><rect x="2" y="14.2" width="12" height="1.5" fill="#6ca2d8"/></svg>
<span class="t" style="left:761px;top:595px;height:16px;line-height:16px;letter-spacing:-0.021px;">Wyczyść dane</span>
<svg class="r" style="left:731px;top:619px" width="16" height="16" viewBox="0 0 16 16"><path d="M1.6 5.2A7.2 7.2 0 0 1 14.4 5.2M14.4 10.8A7.2 7.2 0 0 1 1.6 10.8" fill="none" stroke="#6ca2d8" stroke-width="1.2"/><path d="M14.9 3.2l0.1 2.8-2.7-0.6zM1.1 12.8l-0.1-2.8 2.7 0.6z" fill="#6ca2d8"/><g stroke="#6ca2d8" stroke-width="1.6"><path d="M8 3.2v9.6M3.2 8h9.6M4.6 4.6l6.8 6.8M4.6 11.4l6.8-6.8"/></g><circle cx="8" cy="8" r="3.3" fill="#6ca2d8"/><circle cx="8" cy="8" r="1.5" fill="#fff"/></svg>
<span class="t" style="left:761px;top:620px;height:16px;line-height:16px;letter-spacing:0.052px;">Optymalizuj system plików</span>
<svg class="r" style="left:731px;top:644px" width="16" height="16" viewBox="0 0 16 16"><path d="M2 6.6l2.2-2.2L6.8 7 12.4 0.8l2.3 2.1L6.8 11.4z" fill="#6ca2d8"/><rect x="0" y="12.4" width="16" height="2.8" fill="#6ca2d8"/><rect x="13" y="13.4" width="2" height="0.8" fill="#fff"/></svg>
<span class="t" style="left:762px;top:645px;height:16px;line-height:16px;letter-spacing:0.261px;">Test złych sektorów</span>
<div class="r" style="left:756px;top:666px;width:176px;height:1px;background:#d9d9d9;"></div>
<svg class="r" style="left:731px;top:672px" width="16" height="16" viewBox="0 0 16 16"><circle cx="6.6" cy="6.6" r="5.4" fill="none" stroke="#6ca2d8" stroke-width="2"/><path d="M10.4 10.4L15 15" stroke="#6ca2d8" stroke-width="2.6" stroke-linecap="round"/></svg>
<span class="t" style="left:761px;top:673px;height:16px;line-height:16px;letter-spacing:0.017px;">Eksploruj wolumin</span>
<svg class="r" style="left:731px;top:697px" width="16" height="16" viewBox="0 0 16 16"><path d="M0 0h16v12l-4 4H0z" fill="#6ca2d8"/><path d="M3 4h10M3 7h10M3 10h6" stroke="#fff" stroke-width="1.5"/><path d="M11.2 15.8V11.2h4.6z" fill="#cfdceb" stroke="#6ca2d8" stroke-width="0.8"/></svg>
<span class="t" style="left:761px;top:698px;height:16px;line-height:16px;letter-spacing:-0.122px;">Właściwości</span>
</body></html>
